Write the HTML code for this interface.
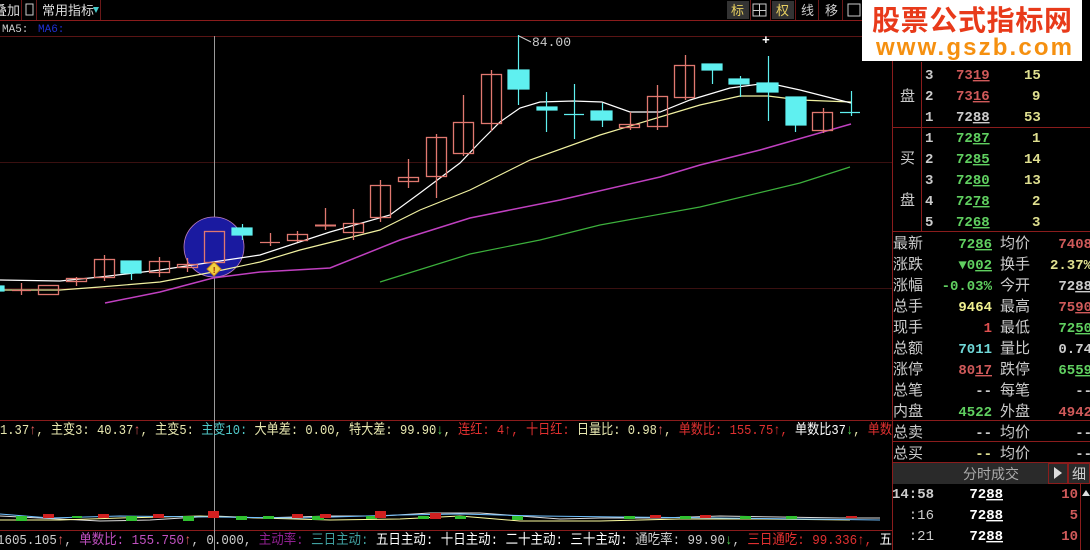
<!DOCTYPE html>
<html><head><meta charset="utf-8">
<style>
html,body{margin:0;padding:0;background:#000;}
body{width:1090px;height:550px;overflow:hidden;position:relative;font-family:"Liberation Sans","Noto Sans CJK SC",sans-serif;}
svg{position:absolute;left:0;top:0;}
svg text{font-family:"Liberation Mono","Noto Sans CJK SC",monospace;}
.cn{font-family:"Liberation Sans","Noto Sans CJK SC",sans-serif !important;}
</style></head>
<body>
<svg width="1090" height="550" viewBox="0 0 1090 550" xmlns="http://www.w3.org/2000/svg">
<line x1="0" y1="20.5" x2="892" y2="20.5" stroke="#8a1c1c"/>
<line x1="0" y1="36.5" x2="892" y2="36.5" stroke="#5a1414"/>
<line x1="0" y1="162.5" x2="892" y2="162.5" stroke="#3a1010"/>
<line x1="0" y1="288.5" x2="892" y2="288.5" stroke="#3a1010"/>
<line x1="0" y1="420.5" x2="892" y2="420.5" stroke="#8a1c1c"/>
<line x1="0" y1="530.5" x2="892" y2="530.5" stroke="#8a1c1c"/>
<line x1="21.5" y1="0" x2="21.5" y2="20" stroke="#6a1818"/>
<line x1="36.5" y1="0" x2="36.5" y2="20" stroke="#6a1818"/>
<line x1="100.5" y1="0" x2="100.5" y2="20" stroke="#6a1818"/>
<text x="-6" y="15" fill="#ddd" font-size="13" class="cn">叠加</text>
<rect x="26" y="4" width="7" height="11" fill="none" stroke="#ccc" stroke-width="1"/>
<text x="42" y="15" fill="#ddd" font-size="13" class="cn">常用指标</text>
<polygon points="93,7 99,7 96,13" fill="#4cc"/>
<rect x="727" y="1" width="22" height="18" fill="#333"/>
<text x="731" y="15" fill="#e8d060" font-size="13" class="cn">标</text>
<rect x="753" y="4" width="13" height="12" fill="none" stroke="#ccc"/><line x1="759.5" y1="4" x2="759.5" y2="16" stroke="#ccc"/><line x1="753" y1="10.5" x2="766" y2="10.5" stroke="#ccc"/>
<rect x="772" y="1" width="22" height="18" fill="#333"/>
<text x="776" y="15" fill="#e8d060" font-size="13" class="cn">权</text>
<text x="801" y="15" fill="#ccc" font-size="13" class="cn">线</text>
<text x="825" y="15" fill="#ccc" font-size="13" class="cn">移</text>
<rect x="848" y="4" width="12" height="12" fill="none" stroke="#ccc"/>
<line x1="750.5" y1="0" x2="750.5" y2="20" stroke="#6a1818"/><line x1="770.5" y1="0" x2="770.5" y2="20" stroke="#6a1818"/><line x1="795.5" y1="0" x2="795.5" y2="20" stroke="#6a1818"/><line x1="818.5" y1="0" x2="818.5" y2="20" stroke="#6a1818"/><line x1="842.5" y1="0" x2="842.5" y2="20" stroke="#6a1818"/>
<text x="2" y="32" fill="#ccc" font-size="11">MA5:</text>
<text x="38" y="32" fill="#2030d0" font-size="11">MA6:</text>

<line x1="214.5" y1="36" x2="214.5" y2="550" stroke="#9a9a9a"/>
<circle cx="214" cy="247" r="30" fill="#1a1aa0" stroke="#c080c0" stroke-width="0.8"/>

<polyline fill="none" stroke="#3cb03c" stroke-width="1.2" points="380,282 470,254 540,240 600,225 700,207 800,183 850,167"/>
<polyline fill="none" stroke="#c040c0" stroke-width="1.5" points="105,303 160,292 213,278 260,272 330,268 400,240 470,218 560,200 660,177 700,165 760,150 851,124"/>
<polyline fill="none" stroke="#f0f0a0" stroke-width="1.2" points="0,290 60,290 100,287 160,282 213,272 260,262 300,250 380,230 420,210 470,190 530,160 600,135 660,117 700,105 740,96 768,96 800,100 851,102"/>
<polyline fill="none" stroke="#ffffff" stroke-width="1.2" points="0,280 60,281 100,277 160,270 213,262 260,255 330,232 390,215 420,193 460,163 480,142 500,122 520,108 540,102 573,101 602,102 630,112 660,112 690,100 730,88 768,83 800,90 851,103"/>

<g stroke="#e07870" fill="none" stroke-width="1.3">
<line x1="21.5" y1="283" x2="21.5" y2="295"/><line x1="12" y1="290.5" x2="31" y2="290.5"/>
<rect x="38.5" y="285.5" width="20" height="9"/>
<line x1="76.5" y1="277" x2="76.5" y2="286"/><rect x="66.5" y="278.5" width="20" height="3"/>
<line x1="104.5" y1="255" x2="104.5" y2="281"/><rect x="94.5" y="259.5" width="20" height="18"/>
<line x1="159.5" y1="257" x2="159.5" y2="277"/><rect x="149.5" y="261.5" width="20" height="11"/>
<line x1="187.5" y1="258" x2="187.5" y2="272"/><rect x="177.5" y="264.5" width="20" height="3"/>
<rect x="204.5" y="231.5" width="20" height="31"/>
<line x1="270.5" y1="233" x2="270.5" y2="246"/><line x1="260" y1="242.5" x2="280" y2="242.5"/>
<line x1="297.5" y1="231" x2="297.5" y2="242"/><rect x="287.5" y="234.5" width="20" height="6"/>
<line x1="325.5" y1="208" x2="325.5" y2="230"/><line x1="315" y1="225.5" x2="336" y2="225.5" stroke-width="2"/>
<line x1="353.5" y1="209" x2="353.5" y2="240"/><rect x="343.5" y="223.5" width="20" height="9"/>
<line x1="380.5" y1="180" x2="380.5" y2="222"/><rect x="370.5" y="185.5" width="20" height="32"/>
<line x1="408.5" y1="159" x2="408.5" y2="188"/><rect x="398.5" y="177.5" width="20" height="4"/>
<line x1="436.5" y1="134" x2="436.5" y2="198"/><rect x="426.5" y="137.5" width="20" height="39"/>
<line x1="463.5" y1="95" x2="463.5" y2="156"/><rect x="453.5" y="122.5" width="20" height="31"/>
<line x1="491.5" y1="70" x2="491.5" y2="131"/><rect x="481.5" y="74.5" width="20" height="49"/>
<line x1="630.5" y1="112" x2="630.5" y2="130"/><rect x="619.5" y="124.5" width="20" height="3"/>
<line x1="657.5" y1="85" x2="657.5" y2="130"/><rect x="647.5" y="96.5" width="20" height="30"/>
<line x1="685.5" y1="55" x2="685.5" y2="100"/><rect x="674.5" y="65.5" width="20" height="32"/>
<line x1="823.5" y1="108" x2="823.5" y2="133"/><rect x="812.5" y="112.5" width="20" height="18"/>
</g>
<g fill="#5ff0f0" stroke="#5ff0f0" stroke-width="1.2">
<rect x="0" y="286" width="4" height="5"/>
<line x1="131.5" y1="273" x2="131.5" y2="280"/><rect x="121" y="261" width="20" height="12"/>
<line x1="242.5" y1="224" x2="242.5" y2="240"/><rect x="232" y="228" width="20" height="7"/>
<line x1="518.5" y1="35" x2="518.5" y2="105"/><rect x="508" y="70" width="21" height="19"/>
<line x1="546.5" y1="92" x2="546.5" y2="132"/><rect x="537" y="107" width="20" height="3"/>
<line x1="574.5" y1="84" x2="574.5" y2="139"/><line x1="564" y1="114.5" x2="584" y2="114.5"/>
<line x1="602.5" y1="103" x2="602.5" y2="127"/><rect x="591" y="111" width="21" height="9"/>
<line x1="712.5" y1="64" x2="712.5" y2="84"/><rect x="702" y="64" width="20" height="6"/>
<line x1="740.5" y1="76" x2="740.5" y2="97"/><rect x="729" y="79" width="20" height="5"/>
<line x1="768.5" y1="56" x2="768.5" y2="121"/><rect x="757" y="83" width="21" height="9"/>
<line x1="795.5" y1="97" x2="795.5" y2="132"/><rect x="786" y="97" width="20" height="28"/>
<line x1="851.5" y1="91" x2="851.5" y2="116"/><line x1="840" y1="112.5" x2="860" y2="112.5"/>
</g>
<text x="762" y="44" fill="#fff" font-size="13" font-weight="bold">+</text>
<line x1="519" y1="36" x2="531" y2="42" stroke="#ccc"/>
<text x="532" y="46" fill="#ccc" font-size="13">84.00</text>
<polygon points="214,262 221,269 214,276 207,269" fill="#f0d040" stroke="#c08020"/>
<text x="211.5" y="273" fill="#a03000" font-size="9" font-weight="bold">!</text>

<g font-size="14">
<text x="0" y="434" fill="#e8e8b0" textLength="892" lengthAdjust="spacingAndGlyphs">1.37<tspan fill="#e06060">↑</tspan>, 主变3: 40.37<tspan fill="#e06060">↑</tspan>, 主变5: <tspan fill="#50c8c8">主变10:</tspan> 大单差: 0.00, 特大差: 99.90<tspan fill="#50d050">↓</tspan>, <tspan fill="#e03030">连红: 4↑, 十日红:</tspan> 日量比: 0.98<tspan fill="#e06060">↑</tspan>, <tspan fill="#e03030">单数比: 155.75↑,</tspan><tspan fill="#fff"> 单数比37</tspan><tspan fill="#50d050">↓</tspan>, <tspan fill="#e03030">单数</tspan></text>
<text x="-3" y="544" fill="#ccc" textLength="895" lengthAdjust="spacingAndGlyphs">1605.105<tspan fill="#e06060">↑</tspan>, <tspan fill="#c050c0">单数比: 155.750</tspan><tspan fill="#e06060">↑</tspan>, 0.000, <tspan fill="#902090">主动率:</tspan> <tspan fill="#40a0a0">三日主动:</tspan> <tspan fill="#fff">五日主动: 十日主动: 二十主动: 三十主动:</tspan> 通吃率: 99.90<tspan fill="#50d050">↓</tspan>, <tspan fill="#e03030">三日通吃: 99.336↑,</tspan><tspan fill="#fff"> 五</tspan></text>
</g>
<g>
<polyline fill="none" stroke="#ddd" stroke-width="1" points="0,516 40,518 100,521 150,520 214,516 260,518 330,516 380,516 430,513 480,513 520,516 560,519 600,518 660,518 720,516 780,517 840,518 880,518"/>
<polyline fill="none" stroke="#ffffa0" stroke-width="1" points="0,520 60,520 120,518 200,516 260,518 330,520 400,519 460,516 520,521 600,521 680,519 760,519 850,520"/>
<polyline fill="none" stroke="#70c0ff" stroke-width="1" points="0,514 50,518 120,516 214,517 300,518 400,515 460,514 540,516 620,517 720,518 800,519 880,520"/>
<g fill="#30c030"><rect x="16" y="516" width="11" height="5"/><rect x="72" y="516" width="10" height="2"/><rect x="126" y="516" width="11" height="5"/><rect x="183" y="516" width="11" height="5"/><rect x="236" y="516" width="11" height="4"/><rect x="263" y="516" width="11" height="3"/><rect x="312" y="516" width="12" height="4"/><rect x="366" y="516" width="11" height="3"/><rect x="418" y="516" width="11" height="3"/><rect x="455" y="516" width="11" height="3"/><rect x="512" y="516" width="11" height="4"/><rect x="624" y="516" width="11" height="3"/><rect x="680" y="516" width="11" height="3"/><rect x="740" y="516" width="11" height="3"/><rect x="786" y="516" width="11" height="3"/></g>
<g fill="#d02020"><rect x="43" y="514" width="11" height="4"/><rect x="98" y="514" width="11" height="4"/><rect x="153" y="514" width="11" height="4"/><rect x="208" y="511" width="11" height="7"/><rect x="292" y="514" width="11" height="4"/><rect x="320" y="514" width="11" height="4"/><rect x="375" y="511" width="11" height="7"/><rect x="430" y="513" width="11" height="6"/><rect x="650" y="515" width="11" height="3"/><rect x="700" y="515" width="11" height="3"/><rect x="846" y="516" width="11" height="2"/></g>
</g>

<line x1="892.5" y1="0" x2="892.5" y2="550" stroke="#8a1c1c"/>
<line x1="921.5" y1="62" x2="921.5" y2="231" stroke="#8a1c1c"/>
<line x1="893" y1="127.5" x2="1090" y2="127.5" stroke="#8a1c1c"/>
<line x1="893" y1="231.5" x2="1090" y2="231.5" stroke="#8a1c1c"/>
<line x1="893" y1="420.5" x2="1090" y2="420.5" stroke="#8a1c1c"/>
<line x1="893" y1="441.5" x2="1090" y2="441.5" stroke="#8a1c1c"/>
<line x1="893" y1="462.5" x2="1090" y2="462.5" stroke="#8a1c1c"/>
<rect x="893" y="463" width="197" height="21" fill="#2a2a2a"/>
<rect x="1048.5" y="463.5" width="19" height="20" fill="none" stroke="#8a1c1c"/>
<rect x="1068.5" y="463.5" width="21" height="20" fill="none" stroke="#8a1c1c"/>
<line x1="1080.5" y1="484" x2="1080.5" y2="550" stroke="#8a1c1c"/>
<polygon points="1082,496 1086,490 1090,496" fill="#ddd"/>
<g font-size="15" class="cn">
<text x="900" y="101" fill="#ccc" class="cn">盘</text>
<text x="900" y="163" fill="#ccc" class="cn">买</text>
<text x="900" y="205" fill="#ccc" class="cn">盘</text>
</g>
<g font-size="14" font-weight="bold">
<text x="925" y="79" fill="#ccc">3</text><text x="956" y="79" fill="#d05a5a">73<tspan text-decoration="underline">19</tspan></text><text x="1024" y="79" fill="#e0e090">15</text>
<text x="925" y="100" fill="#ccc">2</text><text x="956" y="100" fill="#d05a5a">73<tspan text-decoration="underline">16</tspan></text><text x="1032" y="100" fill="#e0e090">9</text>
<text x="925" y="121" fill="#ccc">1</text><text x="956" y="121" fill="#ccc">72<tspan text-decoration="underline">88</tspan></text><text x="1024" y="121" fill="#e0e090">53</text>
<text x="925" y="142" fill="#ccc">1</text><text x="956" y="142" fill="#60d060">72<tspan text-decoration="underline">87</tspan></text><text x="1032" y="142" fill="#e0e090">1</text>
<text x="925" y="163" fill="#ccc">2</text><text x="956" y="163" fill="#60d060">72<tspan text-decoration="underline">85</tspan></text><text x="1024" y="163" fill="#e0e090">14</text>
<text x="925" y="184" fill="#ccc">3</text><text x="956" y="184" fill="#60d060">72<tspan text-decoration="underline">80</tspan></text><text x="1024" y="184" fill="#e0e090">13</text>
<text x="925" y="205" fill="#ccc">4</text><text x="956" y="205" fill="#60d060">72<tspan text-decoration="underline">78</tspan></text><text x="1032" y="205" fill="#e0e090">2</text>
<text x="925" y="226" fill="#ccc">5</text><text x="956" y="226" fill="#60d060">72<tspan text-decoration="underline">68</tspan></text><text x="1032" y="226" fill="#e0e090">3</text>
</g>
<g font-size="15">
<text x="893" y="248" fill="#ccc" class="cn">最新</text><text x="1000" y="248" fill="#ccc" class="cn">均价</text>
<text x="893" y="269" fill="#ccc" class="cn">涨跌</text><text x="1000" y="269" fill="#ccc" class="cn">换手</text>
<text x="893" y="290" fill="#ccc" class="cn">涨幅</text><text x="1000" y="290" fill="#ccc" class="cn">今开</text>
<text x="893" y="311" fill="#ccc" class="cn">总手</text><text x="1000" y="311" fill="#ccc" class="cn">最高</text>
<text x="893" y="332" fill="#ccc" class="cn">现手</text><text x="1000" y="332" fill="#ccc" class="cn">最低</text>
<text x="893" y="353" fill="#ccc" class="cn">总额</text><text x="1000" y="353" fill="#ccc" class="cn">量比</text>
<text x="893" y="374" fill="#ccc" class="cn">涨停</text><text x="1000" y="374" fill="#ccc" class="cn">跌停</text>
<text x="893" y="395" fill="#ccc" class="cn">总笔</text><text x="1000" y="395" fill="#ccc" class="cn">每笔</text>
<text x="893" y="416" fill="#ccc" class="cn">内盘</text><text x="1000" y="416" fill="#ccc" class="cn">外盘</text>
<text x="893" y="437" fill="#ccc" class="cn">总卖</text><text x="1000" y="437" fill="#ccc" class="cn">均价</text>
<text x="893" y="458" fill="#ccc" class="cn">总买</text><text x="1000" y="458" fill="#ccc" class="cn">均价</text>
<text x="963" y="479" fill="#aaa" font-size="14" class="cn">分时成交</text>
<text x="1072" y="479" fill="#ccc" font-size="14" class="cn">细</text>
</g>
<polygon points="1054,467 1062,473 1054,479" fill="#ddd"/>
<g font-size="14" font-weight="bold" text-anchor="end">
<text x="992" y="248" fill="#60d060">72<tspan text-decoration="underline">86</tspan></text><text x="1092" y="248" fill="#d05a5a">7408</text>
<text x="992" y="269" fill="#60d060">▼0<tspan text-decoration="underline">02</tspan></text><text x="1092" y="269" fill="#e0e090">2.37%</text>
<text x="992" y="290" fill="#60d060">-0.03%</text><text x="1092" y="290" fill="#ccc">72<tspan text-decoration="underline">88</tspan></text>
<text x="992" y="311" fill="#f0f090">9464</text><text x="1092" y="311" fill="#d05a5a">75<tspan text-decoration="underline">90</tspan></text>
<text x="992" y="332" fill="#e05050">1</text><text x="1092" y="332" fill="#60d060">72<tspan text-decoration="underline">50</tspan></text>
<text x="992" y="353" fill="#70d8d8">7011</text><text x="1092" y="353" fill="#ccc">0.74</text>
<text x="992" y="374" fill="#d05a5a">80<tspan text-decoration="underline">17</tspan></text><text x="1092" y="374" fill="#60d060">65<tspan text-decoration="underline">59</tspan></text>
<text x="992" y="395" fill="#ccc">--</text><text x="1092" y="395" fill="#ccc">--</text>
<text x="992" y="416" fill="#60d060">4522</text><text x="1092" y="416" fill="#d05a5a">4942</text>
<text x="992" y="437" fill="#ccc">--</text><text x="1092" y="437" fill="#ccc">--</text>
<text x="992" y="458" fill="#e0e090">--</text><text x="1092" y="458" fill="#ccc">--</text>
<text x="934" y="498" fill="#ccc">14:58</text><text x="1003" y="498" fill="#fff">72<tspan text-decoration="underline">88</tspan></text><text x="1078" y="498" fill="#d05a5a">10</text>
<text x="934" y="519" fill="#ccc" font-weight="normal">:16</text><text x="1003" y="519" fill="#fff">72<tspan text-decoration="underline">88</tspan></text><text x="1078" y="519" fill="#d05a5a">5</text>
<text x="934" y="540" fill="#ccc" font-weight="normal">:21</text><text x="1003" y="540" fill="#fff">72<tspan text-decoration="underline">88</tspan></text><text x="1078" y="540" fill="#d05a5a">10</text>
</g>

<rect x="862" y="0" width="220" height="61" fill="#fff"/>
<text x="872" y="30" fill="#e83a1a" font-size="28" font-weight="bold" class="cn" textLength="200">股票公式指标网</text>
<text x="876" y="55" fill="#f59010" font-size="24" font-weight="bold" style="font-family:'Liberation Sans',sans-serif" textLength="196">www.gszb.com</text>
</svg>
</body></html>
